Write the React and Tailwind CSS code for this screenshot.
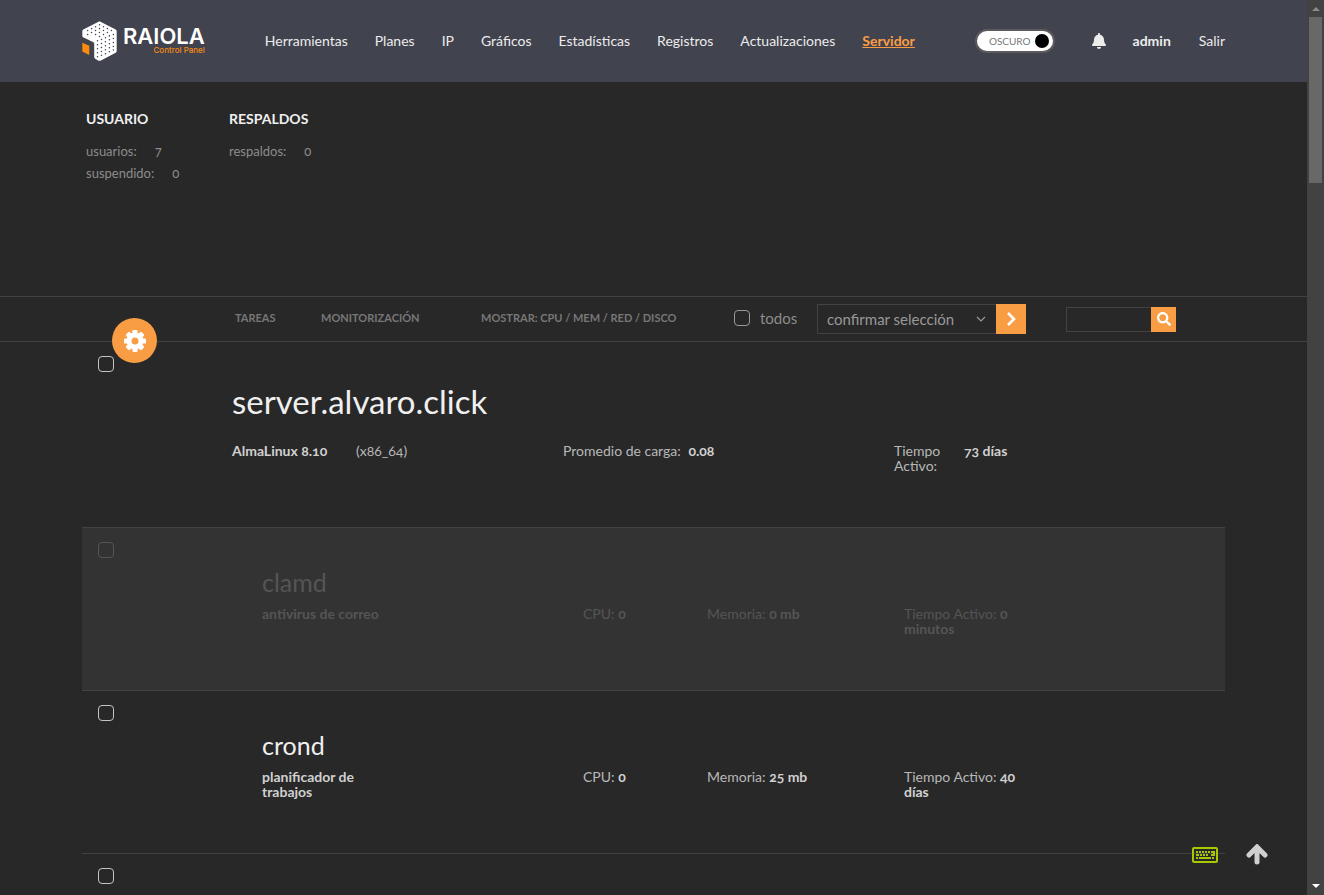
import { useState } from "react";
import { FaBell, FaSearch } from "react-icons/fa";

const NAV = [
  "Herramientas",
  "Planes",
  "IP",
  "Gráficos",
  "Estadísticas",
  "Registros",
  "Actualizaciones",
  "Servidor",
];

const STATS = [
  { title: "USUARIO", rows: [["usuarios:", 7], ["suspendido:", 0]] },
  { title: "RESPALDOS", rows: [["respaldos:", 0]] },
];

// services without info yet only show their tick box
const SERVICES = [
  { name: "clamd", info: "antivirus de correo", cpu: "0", memory: "0 mb", uptime: "0 minutos", stopped: true },
  { name: "crond", info: "planificador de trabajos", cpu: "0", memory: "25 mb", uptime: "40 días" },
  { name: "dovecot" },
];

const TOP_DOTS = [
  [88, 43], [76, 49], [100, 49], [64, 55], [88, 55], [112, 55], [52, 61], [76, 61], [100, 61], [124, 61],
  [64, 67], [88, 67], [112, 67], [52, 73], [76, 73], [100, 73], [88, 79],
];

const SIDE_DOTS = [
  [82, 92], [82, 104], [82, 116], [82, 128], [82, 140], [94, 88], [94, 100], [94, 112], [94, 124], [94, 136],
  [106, 83], [106, 95], [106, 107], [106, 119], [106, 131], [118, 77], [118, 89], [118, 101], [118, 113],
  [118, 125], [130, 73], [130, 85], [130, 97], [130, 109], [130, 120],
];

function Logo() {
  return (
    <a href="#" className="flex items-center gap-1.5">
      <svg viewBox="35 32 106 121" className="h-10 w-[35px]" aria-hidden="true">
        <path
          d="M85 34 Q88 32 91 34 L137 58 Q140 60 140 63 V123 Q140 126 137 128 L91 152 Q88 153 85 152 L75 146 Q72 144 72 141 V101 Q71 95 66 94 Q62 94 59 91 L38 81 Q36 80 36 77 V63 Q36 60 39 58 Z"
          fill="#fff"
        />
        {[...TOP_DOTS, ...SIDE_DOTS].map(([x, y]) => (
          <circle key={`${x}-${y}`} cx={x} cy={y} r="2.3" fill="#41434e" />
        ))}
        <path d="M36 98 L57 107 V135 L36 124 Z" fill="#ff8a0c" />
      </svg>
      <span className="flex flex-col items-end pb-0.5 font-['Inter']">
        <span className="text-[22px] leading-5 font-semibold text-white">RAIOLA</span>
        <span className="text-[8px] leading-2 font-medium text-[#f78b14]">Control Panel</span>
      </span>
    </a>
  );
}

function GearIcon() {
  return (
    <svg viewBox="0 0 24 24" className="size-6" aria-hidden="true">
      <g fill="#fff">
        {[0, 45, 90, 135].map((angle) => (
          <rect key={angle} x="9.4" y="1" width="5.2" height="22" rx="1.2" transform={`rotate(${angle} 12 12)`} />
        ))}
        <circle cx="12" cy="12" r="8.4" />
      </g>
      <circle cx="12" cy="12" r="3.5" fill="#f99d45" />
    </svg>
  );
}

function KeyboardIcon() {
  return (
    <svg viewBox="0 0 26 16" className="h-4 w-[26px]" fill="#a8c800" aria-hidden="true">
      <rect x="1" y="1" width="24" height="14" rx="1" fill="none" stroke="#a8c800" strokeWidth="2" />
      {[4, 7, 10, 13, 16, 19].map((x) => (
        <rect key={x} x={x} y="4" width="2" height="2" />
      ))}
      <path d="M21 4h2v5h-4v-2h2z" />
      {[4, 8, 11, 14].map((x) => (
        <rect key={x} x={x} y="7" width={x === 4 ? 3 : 2} height="2" />
      ))}
      <rect x="4" y="10" width="2" height="2" />
      <rect x="7" y="10" width="12" height="2" />
      <rect x="20" y="10" width="2" height="2" />
    </svg>
  );
}

function ArrowUpIcon() {
  return (
    <svg viewBox="0 0 22 21" className="h-[21px] w-[22px]" aria-hidden="true">
      <path
        d="M11 18V4M3 11l8-8 8 8"
        fill="none"
        stroke="#d0d0d0"
        strokeWidth="5"
        strokeLinecap="round"
        strokeLinejoin="miter"
      />
    </svg>
  );
}

function Checkbox({ id, label, tone = "border-[#c4c4c4]" }) {
  return (
    <input
      id={id}
      type="checkbox"
      aria-label={label}
      className={`block size-4 appearance-none rounded-sm border checked:bg-[#f99d45] ${tone}`}
    />
  );
}

function Header() {
  const [dark, setDark] = useState(true);

  return (
    <header className="h-[82px] bg-[#41434e] text-sm text-[#ececec]">
      <div className="mx-auto flex h-full max-w-[1143px] items-center">
        <Logo />

        <nav className="ml-[60px] flex gap-[27px]">
          {NAV.map((item) => (
            <a
              key={item}
              href="#"
              className={item === "Servidor" ? "font-bold text-[#f99d45] underline" : ""}
            >
              {item}
            </a>
          ))}
        </nav>

        <div className="ml-auto flex items-center">
          <button
            type="button"
            role="switch"
            aria-checked={dark}
            onClick={() => setDark(!dark)}
            className="mr-[38px] flex h-5 items-center gap-1 rounded-full bg-white pr-1 pl-3 text-[10px] text-[#777] ring-2 ring-[#5c5a5c]"
          >
            OSCURO
            <span className="size-3.5 rounded-full bg-black" />
          </button>
          <a href="#" aria-label="Notificaciones" className="mr-[26px]">
            <FaBell className="size-4" />
          </a>
          <a href="#" className="mr-7 font-bold">admin</a>
          <a href="#">Salir</a>
        </div>
      </div>
    </header>
  );
}

function Stats() {
  return (
    <section className="mx-auto flex h-[214px] max-w-[1143px] px-1 pt-[27px]">
      {STATS.map((group) => (
        <div key={group.title} className="w-[143px]">
          <h2 className="mb-[11px] text-sm leading-5 font-bold text-[#f0f0f0]">{group.title}</h2>
          {group.rows.map(([label, value]) => (
            <p key={label} className="flex gap-[18px] text-[13px] leading-[22px] text-[#8c8c8c]">
              <span>{label}</span>
              <span>{value}</span>
            </p>
          ))}
        </div>
      ))}
    </section>
  );
}

function Toolbar() {
  return (
    <section className="border-y border-[#424242]">
      <div className="relative mx-auto flex h-11 max-w-[1143px] items-center text-[11px] font-bold text-[#777]">
        <button
          type="button"
          aria-label="Configurar"
          className="absolute top-[21px] left-[30px] flex size-[45px] items-center justify-center rounded-full bg-[#f99d45]"
        >
          <GearIcon />
        </button>

        <nav className="ml-[153px] flex pb-0.5">
          <a href="#" className="w-[86px]">TAREAS</a>
          <a href="#" className="w-40">MONITORIZACIÓN</a>
          <a href="#" className="w-[253px]">MOSTRAR: CPU / MEM / RED / DISCO</a>
        </nav>

        <div className="flex w-[83px] items-center gap-2.5 pb-0.5">
          <Checkbox id="all" tone="border-[#999]" />
          <label htmlFor="all" className="text-[15px] font-normal text-[#8c8c8c]">todos</label>
        </div>

        <form className="flex items-center" onSubmit={(e) => e.preventDefault()}>
          <div className="relative">
            <select
              aria-label="Acción"
              className="h-[30px] w-[179px] appearance-none border border-r-0 border-[#424242] bg-[#282828] pl-[9px] text-[15px] font-normal text-[#999]"
            >
              <option>confirmar selección</option>
              <option>reiniciar</option>
              <option>parar</option>
            </select>
            <svg viewBox="0 0 10 6" className="pointer-events-none absolute top-3 right-2.5 h-1.5 w-2.5" aria-hidden="true">
              <path d="M1 1l4 4 4-4" fill="none" stroke="#999" strokeWidth="1.2" />
            </svg>
          </div>
          <button type="submit" aria-label="Aplicar" className="flex size-[30px] items-center justify-center bg-[#f99d45]">
            <svg viewBox="0 0 10 14" className="h-3.5 w-2.5" aria-hidden="true">
              <path d="M2 1l6 6-6 6" fill="none" stroke="#fff" strokeWidth="2.6" />
            </svg>
          </button>
        </form>

        <form className="ml-10 flex" onSubmit={(e) => e.preventDefault()}>
          <input
            type="text"
            aria-label="Buscar"
            className="h-[25px] w-[85px] border border-r-0 border-[#424242] bg-transparent px-1 text-sm font-normal"
          />
          <button type="submit" aria-label="Buscar" className="flex size-[25px] items-center justify-center bg-[#f99d45] text-white">
            <FaSearch className="size-3.5" />
          </button>
        </form>
      </div>
    </section>
  );
}

function ServerRow() {
  return (
    <article className="flex h-[185px] px-4 pt-3.5">
      <Checkbox label="server.alvaro.click" />
      <div className="ml-[118px] flex-1 pt-5">
        <h1 className="mb-[17px] text-[33px] leading-[50px] font-normal text-[#f0f0f0]">server.alvaro.click</h1>
        <div className="flex text-sm leading-[15px] text-[#b8b8b8]">
          <b className="w-31 text-[#d0d0d0]">AlmaLinux 8.10</b>
          <span className="w-[207px]">(x86_64)</span>
          <span className="w-[331px]">
            Promedio de carga: <b className="ml-1 text-[#d0d0d0]">0.08</b>
          </span>
          <span className="w-[70px] pr-4">Tiempo Activo:</span>
          <b className="text-[#d0d0d0]">73 días</b>
        </div>
      </div>
    </article>
  );
}

function ServiceRow({ service }) {
  const tone = service.stopped ? "bg-[#333] text-[#555]" : "text-[#b8b8b8]";
  const strong = service.stopped ? "" : "text-[#d0d0d0]";

  return (
    <article className={`flex h-[163px] border-t border-[#424242] px-4 pt-3.5 ${tone}`}>
      <Checkbox label={service.name} tone={service.stopped ? "border-[#555]" : "border-[#c4c4c4]"} />
      {service.info && (
        <div className="ml-[148px] flex-1 pt-[23px]">
          <h2 className={`mb-[7px] text-[25px] leading-[34px] ${service.stopped ? "" : "text-[#f0f0f0]"}`}>
            {service.name}
          </h2>
          <div className="flex text-sm leading-[15px]">
            <div className="w-[321px]">
              <b className={`block w-31 ${strong}`}>{service.info}</b>
            </div>
            <span className="w-31">CPU: <b className={strong}>{service.cpu}</b></span>
            <span className="w-[197px]">Memoria: <b className={strong}>{service.memory}</b></span>
            <span className="w-[124px]">Tiempo Activo: <b className={strong}>{service.uptime}</b></span>
          </div>
        </div>
      )}
    </article>
  );
}

function Scrollbar() {
  return (
    <div className="flex w-[17px] flex-col items-center justify-between bg-[#424242] py-[7px]" aria-hidden="true">
      <div className="flex flex-col items-center gap-1.5">
        <svg viewBox="0 0 8 4" className="h-1 w-2">
          <path d="M0 4l4-4 4 4z" fill="#8a8a8a" />
        </svg>
        <div className="h-[166px] w-[13px] bg-[#686868]" />
      </div>
      <svg viewBox="0 0 8 4" className="h-1 w-2">
        <path d="M0 0h8l-4 4z" fill="#fff" />
      </svg>
    </div>
  );
}

export default function App() {
  return (
    <div className="flex h-screen overflow-hidden bg-[#282828] font-['Lato',sans-serif] oldstyle-nums">
      <div className="relative flex-1 overflow-hidden">
        <Header />
        <Stats />
        <Toolbar />

        <main className="mx-auto max-w-[1143px]">
          <ServerRow />
          {SERVICES.map((service) => (
            <ServiceRow key={service.name} service={service} />
          ))}
        </main>

        <div className="absolute right-[39px] bottom-[30px] flex items-center gap-7">
          <button type="button" aria-label="Atajos de teclado">
            <KeyboardIcon />
          </button>
          <button type="button" aria-label="Subir">
            <ArrowUpIcon />
          </button>
        </div>
      </div>

      <Scrollbar />
    </div>
  );
}
